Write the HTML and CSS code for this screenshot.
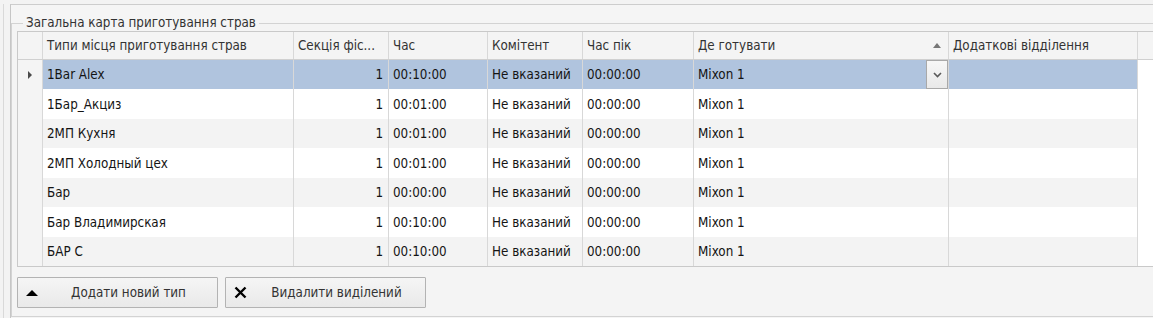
FILE: index.html
```html
<!DOCTYPE html>
<html lang="uk">
<head>
<meta charset="utf-8">
<title>Загальна карта приготування страв</title>
<link rel="stylesheet" href="styles.css">
</head>
<body>
<div class="window">
  <div class="outer">
    <div class="panel">
      <fieldset class="group">
        <legend>Загальна карта приготування страв</legend>
        <div class="grid">
          <div class="row head">
            <div class="cell ind"></div>
            <div class="cell c1">Типи місця приготування страв</div>
            <div class="cell c2">Секція фіс...</div>
            <div class="cell c3">Час</div>
            <div class="cell c4">Комітент</div>
            <div class="cell c5">Час пік</div>
            <div class="cell c6 sorted"><span>Де готувати</span><span class="sort"></span></div>
            <div class="cell c7">Додаткові відділення</div>
            <div class="cell fill"></div>
          </div>

          <div class="row sel">
            <div class="cell ind"><span class="pointer"></span></div>
            <div class="cell c1">1Bar Alex</div>
            <div class="cell c2 num">1</div>
            <div class="cell c3">00:10:00</div>
            <div class="cell c4">Не вказаний</div>
            <div class="cell c5">00:00:00</div>
            <div class="cell c6 editing"><span>Mixon 1</span><span class="dd"><svg width="9" height="6" viewBox="0 0 9 6"><path d="M1 1 L4.5 4.5 L8 1" fill="none" stroke="#5a5a5a" stroke-width="1.6"/></svg></span></div>
            <div class="cell c7"></div>
            <div class="cell fill"></div>
          </div>

          <div class="row tall">
            <div class="cell ind"></div>
            <div class="cell c1">1Бар_Акциз</div>
            <div class="cell c2 num">1</div>
            <div class="cell c3">00:01:00</div>
            <div class="cell c4">Не вказаний</div>
            <div class="cell c5">00:00:00</div>
            <div class="cell c6">Mixon 1</div>
            <div class="cell c7"></div>
            <div class="cell fill"></div>
          </div>

          <div class="row alt">
            <div class="cell ind"></div>
            <div class="cell c1">2МП Кухня</div>
            <div class="cell c2 num">1</div>
            <div class="cell c3">00:01:00</div>
            <div class="cell c4">Не вказаний</div>
            <div class="cell c5">00:00:00</div>
            <div class="cell c6">Mixon 1</div>
            <div class="cell c7"></div>
            <div class="cell fill"></div>
          </div>

          <div class="row tall">
            <div class="cell ind"></div>
            <div class="cell c1">2МП Холодный цех</div>
            <div class="cell c2 num">1</div>
            <div class="cell c3">00:01:00</div>
            <div class="cell c4">Не вказаний</div>
            <div class="cell c5">00:00:00</div>
            <div class="cell c6">Mixon 1</div>
            <div class="cell c7"></div>
            <div class="cell fill"></div>
          </div>

          <div class="row alt">
            <div class="cell ind"></div>
            <div class="cell c1">Бар</div>
            <div class="cell c2 num">1</div>
            <div class="cell c3">00:00:00</div>
            <div class="cell c4">Не вказаний</div>
            <div class="cell c5">00:00:00</div>
            <div class="cell c6">Mixon 1</div>
            <div class="cell c7"></div>
            <div class="cell fill"></div>
          </div>

          <div class="row tall">
            <div class="cell ind"></div>
            <div class="cell c1">Бар Владимирская</div>
            <div class="cell c2 num">1</div>
            <div class="cell c3">00:10:00</div>
            <div class="cell c4">Не вказаний</div>
            <div class="cell c5">00:00:00</div>
            <div class="cell c6">Mixon 1</div>
            <div class="cell c7"></div>
            <div class="cell fill"></div>
          </div>

          <div class="row alt">
            <div class="cell ind"></div>
            <div class="cell c1">БАР С</div>
            <div class="cell c2 num">1</div>
            <div class="cell c3">00:10:00</div>
            <div class="cell c4">Не вказаний</div>
            <div class="cell c5">00:00:00</div>
            <div class="cell c6">Mixon 1</div>
            <div class="cell c7"></div>
            <div class="cell fill"></div>
          </div>
        </div>

        <div class="actions">
          <button class="btn" type="button">
            <span class="icon"><svg width="14" height="8" viewBox="0 0 14 8"><path d="M1 7 L7 1 L13 7 Z" fill="#000"/></svg></span>
            <span class="label">Додати новий тип</span>
          </button>
          <button class="btn" type="button">
            <span class="icon"><svg width="13" height="13" viewBox="0 0 13 13"><path d="M1.5 1.5 L11.5 11.5 M11.5 1.5 L1.5 11.5" stroke="#000" stroke-width="2.4" fill="none"/></svg></span>
            <span class="label">Видалити виділений</span>
          </button>
        </div>
      </fieldset>
    </div>
  </div>
</div>
</body>
</html>
```

FILE: styles.css
```css
* { box-sizing: border-box; }

html, body {
  margin: 0;
  padding: 0;
  background: #f3f3f3;
}

body {
  font-family: "DejaVu Sans Condensed", "DejaVu Sans", sans-serif;
  font-stretch: condensed;
  font-size: 13.3px;
  color: #141414;
}

.window {
  width: 1153px;
  height: 318px;
  overflow: hidden;
  padding-left: 3px;
}

.outer {
  height: 100%;
  border-left: 1px solid #d9d9d9;
  padding-left: 6px;
}

.panel {
  height: 314px;
  margin-top: 4px;
  border-top: 1px solid #cdcdcd;
  border-left: 1px solid #c6c6c6;
  background: #f5f5f5;
}

.group {
  margin: 10px 0 0 0;
  padding: 0 0 8px 5px;
  width: 1200px;
  min-width: 0;
  border: 1px solid #d3d3d3;
  background: #f4f4f4;
}

.group legend {
  margin-left: 6px;
  padding: 0 3px;
  line-height: 16px;
  font-size: 13.3px;
  color: #333;
}

.grid {
  width: 1180px;
  border: 1px solid #c9c9c9;
  background: #fff;
}

.row {
  display: flex;
  height: 29px;
  background: #fff;
}

.row.tall { height: 30px; }

.cell {
  flex: none;
  display: flex;
  align-items: center;
  padding: 0 4px;
  border-right: 1px solid #d8d8d8;
  white-space: nowrap;
  overflow: hidden;
}

.ind { width: 25px; background: #f4f4f4; padding: 0; }
.c1 { width: 251px; }
.c2 { width: 95px; }
.c3 { width: 99px; }
.c4 { width: 95px; }
.c5 { width: 111px; }
.c6 { width: 255px; }
.c7 { width: 189px; }
.fill { flex: 1; border-right: 0; background: #fff; }

.num { justify-content: flex-end; padding-right: 5px; }

.row.alt .cell:not(.ind):not(.fill) { background: #f3f3f3; }
.row.sel .cell:not(.ind):not(.fill) { background: #b0c4de; }

.row.head {
  height: 28px;
  border-bottom: 1px solid #d0d0d0;
  background: #f4f4f4;
  color: #333;
}

.row.head .cell { background: #f4f4f4; }
.row.head .fill { background: #f4f4f4; }

.sorted { justify-content: space-between; padding-right: 7px; }

.sort {
  width: 0;
  height: 0;
  border-left: 4.5px solid transparent;
  border-right: 4.5px solid transparent;
  border-bottom: 5px solid #777;
}

.pointer {
  margin-left: 10px;
  width: 0;
  height: 0;
  border-top: 4px solid transparent;
  border-bottom: 4px solid transparent;
  border-left: 4px solid #4a4a4a;
}

.editing { justify-content: space-between; padding-right: 0; }

.dd {
  width: 22px;
  height: 100%;
  display: flex;
  align-items: center;
  justify-content: center;
  border: 1px solid #a9a9a9;
  background: linear-gradient(#f7f7f7, #e9e9e9);
}

.actions {
  display: flex;
  gap: 7px;
  margin-top: 10px;
}

.btn {
  width: 201px;
  height: 31px;
  display: flex;
  align-items: center;
  padding: 0 0 0 6px;
  border: 1px solid #b3b3b3;
  border-radius: 1px;
  background: linear-gradient(#f5f5f5, #e9e9e9);
  font: inherit;
  color: #333;
}

.btn .icon {
  width: 16px;
  display: flex;
  align-items: center;
  justify-content: center;
}

.btn .label {
  flex: 1;
  text-align: center;
}
```
